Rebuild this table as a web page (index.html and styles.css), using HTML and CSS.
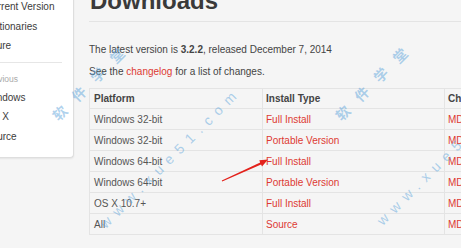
FILE: index.html
```html
<!DOCTYPE html>
<html>
<head>
<meta charset="utf-8">
<link rel="stylesheet" href="styles.css">
</head>
<body>
<div class="page">
  <aside class="sidebar">
    <ul class="nav">
      <li>Current Version</li>
      <li>Dictionaries</li>
      <li>Azure</li>
    </ul>
    <hr class="divider">
    <div class="nav-head">Previous</div>
    <ul class="nav nav-prev">
      <li>Windows</li>
      <li>OS X</li>
      <li>Source</li>
    </ul>
  </aside>
  <main class="main">
    <h1 class="title">Downloads</h1>
    <p class="lead">The latest version is <b>3.2.2</b>, released December 7, 2014</p>
    <p class="lead second">See the <a class="red">changelog</a> for a list of changes.</p>
    <table class="dl">
      <colgroup><col class="c1"><col class="c2"><col class="c3"></colgroup>
      <tr><th>Platform</th><th>Install Type</th><th>Checksum</th></tr>
      <tr><td>Windows 32-bit</td><td class="red">Full Install</td><td class="red">MD5</td></tr>
      <tr><td>Windows 32-bit</td><td class="red">Portable Version</td><td class="red">MD5</td></tr>
      <tr><td>Windows 64-bit</td><td class="red">Full Install</td><td class="red">MD5</td></tr>
      <tr><td>Windows 64-bit</td><td class="red">Portable Version</td><td class="red">MD5</td></tr>
      <tr><td>OS X 10.7+</td><td class="red">Full Install</td><td class="red">MD5</td></tr>
      <tr><td>All</td><td class="red">Source</td><td class="red">MD5</td></tr>
    </table>
  </main>
</div>
<svg class="arrow" width="461" height="248" viewBox="0 0 461 248">
  <polygon fill="#e3211b" points="221.8,180.4 260.2,162.4 259.3,160.2 268,159.5 262,166.4 261.1,164.4 222.2,181.6"/>
</svg>
<div class="wm wm-cn wm1">软件学堂</div>
<div class="wm wm-cn wm2">软件学堂</div>
<div class="wm wm-url wm3">www.xue51.com</div>
<div class="wm wm-url wm4">www.xue51.com</div>
</body>
</html>
```
FILE: styles.css
```css
* { box-sizing: border-box; }
html, body { margin: 0; padding: 0; }
body {
  background: #f5f5f5;
  font-family: "Liberation Sans", Arial, sans-serif;
  font-size: 10px;
  color: #444;
  width: 461px;
  height: 248px;
  overflow: hidden;
  position: relative;
}
.page { display: flex; align-items: flex-start; }

.sidebar {
  flex: none;
  width: 100px;
  margin-left: -26px;
  margin-top: -3px;
  padding: 0 0 11px 10px;
  background: #fff;
  border: 1px solid #dedede;
  border-top: none;
  border-radius: 0 0 4px 0;
  box-shadow: 0 1px 2px rgba(0,0,0,0.07);
}
.nav { list-style: none; margin: 0; padding: 0; }
.nav li { line-height: 19.5px; color: #3c3c3c; font-size: 10px; white-space: nowrap; }
.divider { border: 0; border-top: 1px solid #e6e6e6; margin: 6px 11px 0 0; height: 0; }
.nav-head { font-size: 8.5px; color: #aaa; line-height: 14px; margin-top: 9px; }
.nav-prev { margin-top: 2px; }

.main { flex: none; width: 480px; margin-left: 15px; }
.title {
  margin: -13px 0 0;
  font-size: 24px;
  line-height: 28px;
  font-weight: bold;
  color: #3a3a3a;
  padding: 0 0 6px 1px;
  border-bottom: 1px solid #e4e4e4;
}
.lead { margin: 21px 0 0; line-height: 14px; color: #444; }
.lead.second { margin-top: 8px; }
.red { color: #dd3a33; text-decoration: none; }

.dl { border-collapse: collapse; width: 480px; margin-top: 9px; }
.dl .c1 { width: 173px; }
.dl .c2 { width: 182px; }
.dl th, .dl td {
  border: 1px solid #e4e4e4;
  height: 21px;
  padding: 0 4px;
  text-align: left;
  font-size: 10px;
  white-space: nowrap;
}
.dl th { font-weight: bold; color: #444; height: 20px; }
.dl td { color: #555; }
.dl td.red { color: #dd3a33; padding-left: 3px; }
.dl th + th { padding-left: 3px; }

.arrow { position: absolute; left: 0; top: 0; pointer-events: none; }

.wm {
  position: absolute;
  white-space: nowrap;
  color: rgba(95, 165, 220, 0.5);
  transform: translate(-50%, -50%) rotate(-45deg);
  pointer-events: none;
}
.wm-cn { font-family: "Noto Sans CJK SC", sans-serif; font-size: 14px; font-weight: bold; letter-spacing: 13px; padding-left: 13px; }
.wm-url { font-family: "Liberation Sans", sans-serif; font-size: 14px; letter-spacing: 7px; padding-left: 7px; }
.wm1 { left: 88px; top: 84px; }
.wm2 { left: 371px; top: 84px; }
.wm3 { left: 168px; top: 160px; }
.wm4 { left: 445px; top: 157px; }
```
